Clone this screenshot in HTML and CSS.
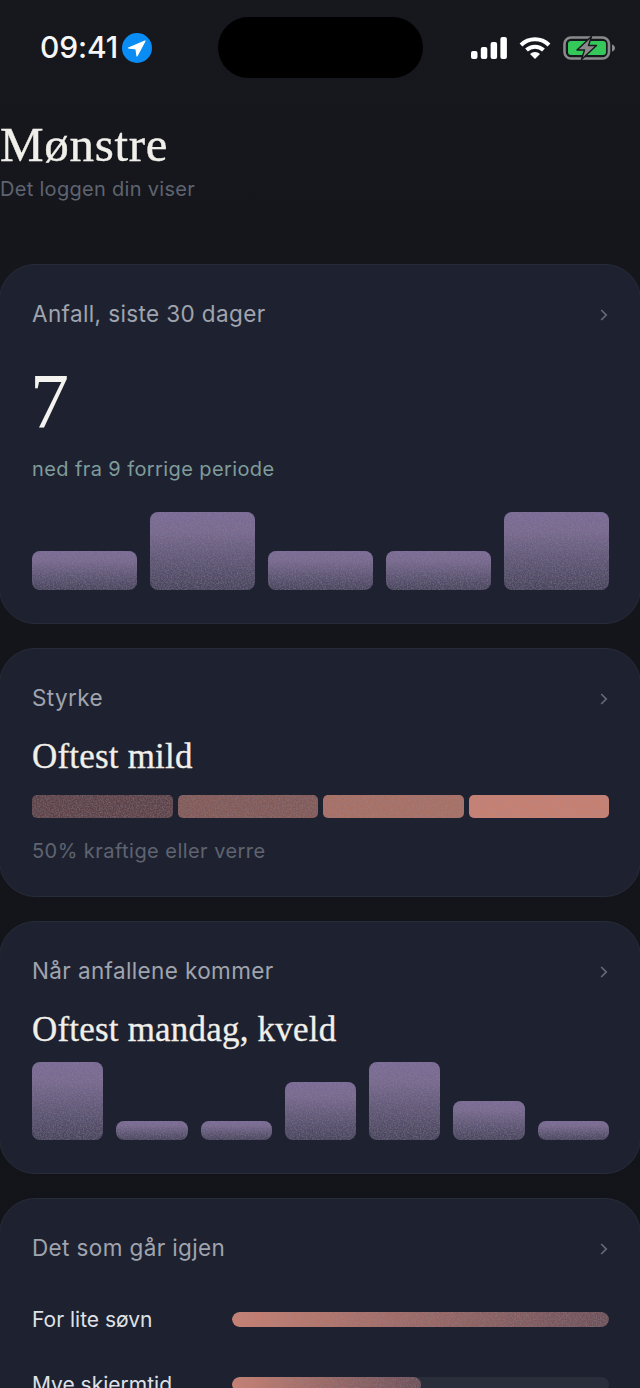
FILE: index.html
```html
<!DOCTYPE html>
<html lang="no">
<head>
<meta charset="utf-8">
<title>Mønstre</title>
<link rel="stylesheet" href="styles.css">
</head>
<body>
<svg class="defs" width="0" height="0" aria-hidden="true"><filter id="grain" x="0" y="0" width="100%" height="100%"><feTurbulence type="fractalNoise" baseFrequency="0.7" numOctaves="2" seed="4" result="n"/><feColorMatrix in="n" type="matrix" values="0 0 0 0 0.3  0 0 0 0 0.28  0 0 0 0 0.35  0.7 0 0 0 -0.26" result="g"/><feComposite in="g" in2="SourceAlpha" operator="in" result="m"/><feMerge><feMergeNode in="SourceGraphic"/><feMergeNode in="m"/></feMerge></filter></svg>
<div class="screen">
  <header class="status">
    <div class="status-left">
      <span class="time">09:41</span>
      <svg class="loc" viewBox="0 0 30 30"><circle cx="15" cy="15" r="15" fill="#0a8cf5"/><path d="M23 8 L6.5 15 L14 16 L15 23 Z" fill="#fff" stroke="#fff" stroke-width="1.2" stroke-linejoin="round"/></svg>
    </div>
    <div class="island"></div>
    <div class="status-right">
      <svg class="signal" viewBox="0 0 36 22"><rect x="0" y="14" width="6.5" height="8" rx="2" fill="#fff"/><rect x="9.8" y="10" width="6.5" height="12" rx="2" fill="#fff"/><rect x="19.6" y="5" width="6.5" height="17" rx="2" fill="#fff"/><rect x="29.4" y="0" width="6.5" height="22" rx="2" fill="#fff"/></svg>
      <svg class="wifi" viewBox="0 0 32 23"><path d="M2 9 A20 20 0 0 1 30 9" fill="none" stroke="#fff" stroke-width="4"/><path d="M7.5 14 A12.5 12.5 0 0 1 24.5 14" fill="none" stroke="#fff" stroke-width="4"/><path d="M16 23 L11 18 A7 7 0 0 1 21 18 Z" fill="#fff"/></svg>
      <svg class="battery" viewBox="0 0 52 24"><rect x="1.5" y="1.5" width="44.5" height="21" rx="6.5" fill="none" stroke="#8a8a8a" stroke-width="2.6"/><rect x="5" y="5" width="38" height="14" rx="3" fill="#34c759"/><path d="M49 8.5 C51 9 52 10.5 52 12 C52 13.5 51 15 49 15.5 Z" fill="#8a8a8a"/><path d="M28.5 0.5 L14 14 H21.5 L18.5 23.5 L33.5 9.5 H25.5 Z" fill="#8a8a8a" stroke="#16181e" stroke-width="1.4" stroke-linejoin="round"/></svg>
    </div>
  </header>

  <section class="page-head">
    <h1>Mønstre</h1>
    <p>Det loggen din viser</p>
  </section>

  <main class="cards">
    <article class="card card-count">
      <div class="card-head"><h2>Anfall, siste 30 dager</h2><svg class="chev" viewBox="0 0 8 12"><path d="M1.2 1 L6.2 6 L1.2 11" fill="none" stroke="currentColor" stroke-width="1.7"/></svg></div>
      <div class="big">7</div>
      <p class="delta">ned fra 9 forrige periode</p>
      <div class="bars bars-wide">
        <div class="bar h39"></div><div class="bar h78"></div><div class="bar h39"></div><div class="bar h39"></div><div class="bar h78"></div>
      </div>
    </article>

    <article class="card card-sev">
      <div class="card-head"><h2>Styrke</h2><svg class="chev" viewBox="0 0 8 12"><path d="M1.2 1 L6.2 6 L1.2 11" fill="none" stroke="currentColor" stroke-width="1.7"/></svg></div>
      <div class="headline">Oftest mild</div>
      <div class="segments">
        <div class="seg s1"></div><div class="seg s2"></div><div class="seg s3"></div><div class="seg s4"></div>
      </div>
      <p class="note">50% kraftige eller verre</p>
    </article>

    <article class="card card-when">
      <div class="card-head"><h2>Når anfallene kommer</h2><svg class="chev" viewBox="0 0 8 12"><path d="M1.2 1 L6.2 6 L1.2 11" fill="none" stroke="currentColor" stroke-width="1.7"/></svg></div>
      <div class="headline">Oftest mandag, kveld</div>
      <div class="bars bars-week">
        <div class="bar h78"></div><div class="bar h19"></div><div class="bar h19"></div><div class="bar h58"></div><div class="bar h78"></div><div class="bar h39"></div><div class="bar h19"></div>
      </div>
    </article>

    <article class="card card-rep">
      <div class="card-head"><h2>Det som går igjen</h2><svg class="chev" viewBox="0 0 8 12"><path d="M1.2 1 L6.2 6 L1.2 11" fill="none" stroke="currentColor" stroke-width="1.7"/></svg></div>
      <div class="rows">
        <div class="row"><span class="row-label">For lite søvn</span><div class="track"><div class="fill" style="width:100%"></div></div></div>
        <div class="row"><span class="row-label">Mye skjermtid</span><div class="track"><div class="fill" style="width:50%"></div></div></div>
      </div>
    </article>
  </main>
</div>
</body>
</html>
```

FILE: styles.css
```css
* { box-sizing: border-box; margin: 0; padding: 0; }
html, body { height: 1388px; overflow: hidden; background: #14161c; }
body { font-family: Inter, "Liberation Sans", sans-serif; color: #fff; }
.defs { position: absolute; }
.screen { width: 640px; height: 1388px; overflow: hidden; background: linear-gradient(#16181e, #14161c 300px, #12141a); }

.status { height: 96px; display: flex; align-items: flex-start; justify-content: space-between; padding: 17px 25px 0 40px; position: relative; }
.status-left { display: flex; align-items: center; gap: 4px; height: 61px; }
.time { font-size: 30px; font-weight: 500; letter-spacing: -.1px; line-height: 61px; color: #f6f6f6; }
.loc { width: 30px; height: 30px; }
.island { position: absolute; left: 218px; top: 17px; width: 205px; height: 61px; border-radius: 31px; background: #000; }
.status-right { display: flex; align-items: center; height: 61px; margin-left: auto; }
.signal { width: 36px; height: 22px; }
.wifi { width: 32px; height: 23px; margin-left: 12px; }
.battery { width: 52px; height: 24px; margin-left: 12px; }

.page-head { height: 168px; padding-top: 24px; }
.page-head h1 { font-family: "Liberation Serif", serif; font-weight: 400; font-size: 49px; line-height: 50px; color: #f1efe9; letter-spacing: .7px; -webkit-text-stroke: .4px #f1efe9; }
.page-head p { font-size: 20px; line-height: 28px; margin-top: 5px; color: #5f6470; letter-spacing: .3px; }

.cards { display: flex; flex-direction: column; gap: 24px; }
.card { background: #1e2230; border: 1px solid #272c39; border-radius: 36px; padding: 0 31px 0 32px; margin: 0 -1px; }
.card-head { display: flex; align-items: center; justify-content: space-between; height: 30px; margin-top: 34px; }
.card-head h2 { font-size: 22.5px; font-weight: 400; letter-spacing: .38px; color: #a0a4ae; line-height: 30px; }
.chev { width: 8px; height: 12px; color: #666b7a; margin: 2px 1px 0 0; }

.card-count { height: 360px; }
.big { font-family: "Liberation Serif", serif; font-size: 78px; line-height: 90px; color: #f4f3ef; margin: 27px 0 0 -2px; }
.delta { font-size: 20px; line-height: 28px; color: #7f9c9b; letter-spacing: .4px; margin-top: 9px; }

.bars { display: flex; align-items: flex-end; gap: 13px; }
.bars-wide { margin-top: 29px; height: 78px; }
.bars-week { margin-top: 12px; height: 78px; }
.bar { flex: 1; border-radius: 8px; background: linear-gradient(#7a6a96, #78698f 25%, #47435c); filter: url(#grain); }
.h19 { height: 19px; } .h39 { height: 39px; } .h58 { height: 58px; } .h78 { height: 78px; }

.card-sev { height: 249px; }
.headline { font-family: "Liberation Serif", serif; font-size: 35px; line-height: 40px; color: #f1efe9; letter-spacing: .2px; margin-top: 24px; -webkit-text-stroke: .3px #f1efe9; }
.segments { display: flex; gap: 5px; margin-top: 18px; }
.seg { flex: 1; height: 23px; border-radius: 5px; filter: url(#grain); }
.s1 { background: #5e4247; } .s2 { background: #835a57; } .s3 { background: #a87063; } .s4 { background: #c88070; }
.note { font-size: 20px; line-height: 28px; color: #5f6470; letter-spacing: .45px; margin-top: 19px; }

.card-when { height: 253px; }
.card-rep { height: 260px; }
.rows { display: flex; flex-direction: column; gap: 43px; margin-top: 45px; }
.row { display: flex; align-items: center; height: 22px; }
.row-label { width: 200px; font-size: 21px; color: #dfe1e6; line-height: 22px; padding-top: 1px; }
.track { flex: 1; height: 15px; border-radius: 8px; background: #2a2e3b; overflow: hidden; }
.fill { height: 15px; border-radius: 8px; background: linear-gradient(90deg, #c88070, #6e5058); filter: url(#grain); }
```
